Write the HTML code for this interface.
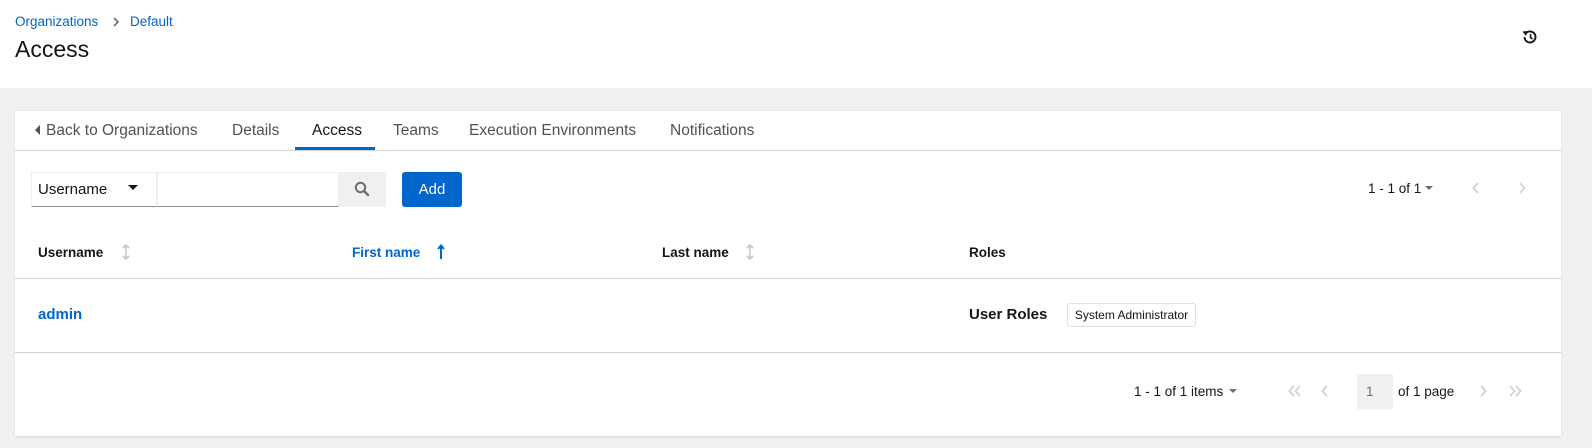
<!DOCTYPE html>
<html><head><meta charset="utf-8"><style>
*{box-sizing:border-box;margin:0;padding:0}
body{width:1592px;height:448px;background:#f0f0f0;font-family:"Liberation Sans",sans-serif;color:#151515;position:relative;overflow:hidden}
.a{position:absolute;white-space:nowrap}
.hdr{position:absolute;left:0;top:0;width:1592px;height:88px;background:#fff}
.card{position:absolute;left:15px;top:111px;width:1546px;height:325px;background:#fff;box-shadow:0 1px 2px rgba(0,0,0,.12)}
.tab{font-size:15.5px;color:#4f5255;top:122px}
.th{font-size:13.5px;font-weight:bold;top:245px}
.tri{position:absolute;width:0;height:0;border-left:5px solid transparent;border-right:5px solid transparent;border-top:5px solid #151515}
</style></head><body>
<div class="hdr"></div>
<div class="a" style="left:15px;top:14px;font-size:13.5px;color:#06c">Organizations</div>
<svg class="a" style="left:112px;top:17px" width="8" height="10" viewBox="0 0 8 10"><path d="M2 1l4 4-4 4" fill="none" stroke="#6a6e73" stroke-width="1.6"/></svg>
<div class="a" style="left:130px;top:14px;font-size:13.5px;color:#06c">Default</div>
<div class="a" style="left:15px;top:36px;font-size:23px">Access</div>
<svg class="a" style="left:1521px;top:28px" width="18" height="18" viewBox="0 0 18 18"><path d="M3.5 9a5.5 5.5 0 1 0 1.8-4.1" fill="none" stroke="#151515" stroke-width="1.9"/><path d="M1.5 3.5 L6.5 3 L5 8Z" fill="#151515"/><path d="M9.5 6v3.5l2 1.5" fill="none" stroke="#151515" stroke-width="1.6"/></svg>
<div class="card"></div>
<div class="a" style="left:15px;top:150px;width:1546px;height:1px;background:#d2d2d2"></div>
<div class="a" style="left:295px;top:147px;width:80px;height:3px;background:#06c"></div>
<svg class="a" style="left:35px;top:125px" width="6" height="10" viewBox="0 0 6 10"><path d="M5 0v10L0 5z" fill="#4f5255"/></svg>
<div class="a tab" style="left:46px">Back to Organizations</div>
<div class="a tab" style="left:232px">Details</div>
<div class="a tab" style="left:312px;color:#151515">Access</div>
<div class="a tab" style="left:393px">Teams</div>
<div class="a tab" style="left:469px">Execution Environments</div>
<div class="a tab" style="left:670px">Notifications</div>
<div class="a" style="left:31px;top:172px;width:126px;height:35px;border:1px solid #f0f0f0;border-bottom:1px solid #8a8d90"></div>
<div class="a" style="left:38px;top:181px;font-size:15px">Username</div>
<div class="tri" style="left:128px;top:185px"></div>
<div class="a" style="left:157px;top:172px;width:182px;height:35px;border:1px solid #f0f0f0;border-bottom:1px solid #8a8d90"></div>
<div class="a" style="left:339px;top:172px;width:47px;height:35px;background:#f0f0f0"></div>
<svg class="a" style="left:354px;top:181px" width="16" height="16" viewBox="0 0 16 16"><circle cx="6.5" cy="6.5" r="4.7" fill="none" stroke="#6a6e73" stroke-width="2"/><path d="M10 10l4 4" stroke="#6a6e73" stroke-width="2.4" stroke-linecap="round"/></svg>
<div class="a" style="left:402px;top:172px;width:60px;height:35px;background:#06c;border-radius:3px;color:#fff;font-size:15px;text-align:center;line-height:35px">Add</div>
<div class="a" style="left:1368px;top:181px;font-size:13.5px">1 - 1 of 1</div>
<div class="tri" style="left:1425px;top:186px;border-top-color:#6a6e73;border-width:4px 4px 0"></div>
<svg class="a" style="left:1472px;top:182px" width="8" height="12" viewBox="0 0 8 12"><path d="M6 1L1.5 6 6 11" fill="none" stroke="#d2d2d2" stroke-width="1.8"/></svg>
<svg class="a" style="left:1518px;top:182px" width="8" height="12" viewBox="0 0 8 12"><path d="M2 1l4.5 5L2 11" fill="none" stroke="#d2d2d2" stroke-width="1.8"/></svg>
<div class="a th" style="left:38px">Username</div>
<svg class="a" style="left:122px;top:244px" width="8" height="16" viewBox="0 0 8 16"><path d="M4 1v14M1 4l3-3 3 3M1 12l3 3 3-3" fill="none" stroke="#c7c7c7" stroke-width="1.6"/></svg>
<div class="a th" style="left:352px;color:#06c">First name</div>
<svg class="a" style="left:437px;top:244px" width="8" height="16" viewBox="0 0 8 16"><path d="M4 2v13M1 5l3-3.5 3 3.5" fill="none" stroke="#06c" stroke-width="2"/></svg>
<div class="a th" style="left:662px">Last name</div>
<svg class="a" style="left:746px;top:244px" width="8" height="16" viewBox="0 0 8 16"><path d="M4 1v14M1 4l3-3 3 3M1 12l3 3 3-3" fill="none" stroke="#c7c7c7" stroke-width="1.6"/></svg>
<div class="a th" style="left:969px">Roles</div>
<div class="a" style="left:15px;top:278px;width:1546px;height:1px;background:#d2d2d2"></div>
<div class="a" style="left:38px;top:306px;font-size:15px;font-weight:bold;color:#06c">admin</div>
<div class="a" style="left:969px;top:306px;font-size:15px;font-weight:bold">User Roles</div>
<div class="a" style="left:1067px;top:303px;width:129px;height:24px;border:1px solid #e0e0e0;border-radius:3px;font-size:12px;line-height:22px;text-align:center">System Administrator</div>
<div class="a" style="left:15px;top:352px;width:1546px;height:1px;background:#d2d2d2"></div>
<div class="a" style="left:1134px;top:384px;font-size:13.5px">1 - 1 of 1 items</div>
<div class="tri" style="left:1229px;top:389px;border-top-color:#6a6e73;border-width:4px 4px 0"></div>
<svg class="a" style="left:1288px;top:385px" width="14" height="12" viewBox="0 0 14 12"><path d="M6 1L1.5 6 6 11M12 1L7.5 6 12 11" fill="none" stroke="#d2d2d2" stroke-width="1.8"/></svg>
<svg class="a" style="left:1321px;top:385px" width="8" height="12" viewBox="0 0 8 12"><path d="M6 1L1.5 6 6 11" fill="none" stroke="#d2d2d2" stroke-width="1.8"/></svg>
<div class="a" style="left:1357px;top:374px;width:36px;height:35px;background:#f0f0f0;font-size:13.5px;color:#6a6e73;padding:10px 0 0 9px">1</div>
<div class="a" style="left:1398px;top:384px;font-size:13.5px">of 1 page</div>
<svg class="a" style="left:1479px;top:385px" width="8" height="12" viewBox="0 0 8 12"><path d="M2 1l4.5 5L2 11" fill="none" stroke="#d2d2d2" stroke-width="1.8"/></svg>
<svg class="a" style="left:1508px;top:385px" width="14" height="12" viewBox="0 0 14 12"><path d="M2 1l4.5 5L2 11M8 1l4.5 5L8 11" fill="none" stroke="#d2d2d2" stroke-width="1.8"/></svg>
</body></html>
